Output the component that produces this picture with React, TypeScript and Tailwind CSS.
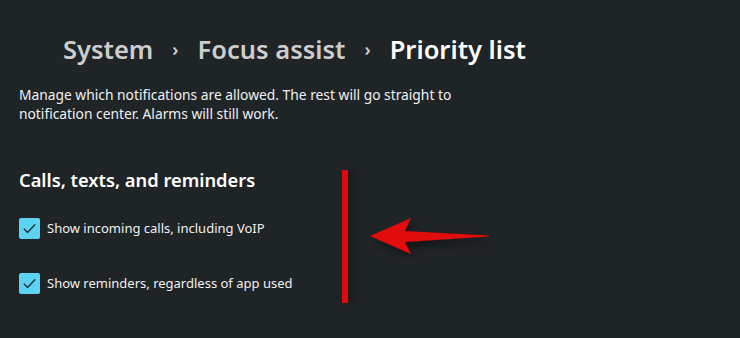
import React from 'react';

function Check() {
  return (
    <span className="flex h-[21px] w-[21px] items-center justify-center rounded-[2px] bg-[#5cd3f2]">
      <svg width="15" height="15" viewBox="0 0 14 14" fill="none">
        <path d="M2 7.5l3.2 3.2L12 3.5" stroke="#1b2a30" strokeWidth="1.2" strokeLinecap="round" strokeLinejoin="round" />
      </svg>
    </span>
  );
}

export default function App() {
  const items = ['Show incoming calls, including VoIP', 'Show reminders, regardless of app used'];

  return (
    <div
      className="relative h-[338px] w-[740px] overflow-hidden bg-[#1f2427] text-white"
      style={{ fontFamily: '"Noto Sans", "Open Sans", sans-serif' }}
    >
      {/* Breadcrumb */}
      <div className="flex items-center pl-[63px] pt-[27px] text-[25.5px] font-semibold leading-[44px]">
        <span className="text-[#cdcdcd]">System</span>
        <span className="mx-[19px] text-[18px] text-[#cdcdcd]">›</span>
        <span className="text-[#cdcdcd]">Focus assist</span>
        <span className="mx-[19px] text-[18px] text-[#cdcdcd]">›</span>
        <span className="text-white">Priority list</span>
      </div>

      <p className="mt-[14px] w-[470px] pl-[19px] text-[13.8px] leading-[19px] text-[#f0f0f0]">
        Manage which notifications are allowed. The rest will go straight to notification center. Alarms will still work.
      </p>

      <h2 className="mt-[44px] pl-[19px] text-[18.3px] font-semibold leading-[26px]">Calls, texts, and reminders</h2>

      <div className="mt-[25px] flex flex-col gap-[34px] pl-[19px]">
        {items.map((t) => (
          <label key={t} className="flex items-center gap-[7px] text-[13px] leading-[21px] text-[#f0f0f0]">
            <Check />
            <span>{t}</span>
          </label>
        ))}
      </div>

      {/* annotation */}
      <div className="absolute left-[342px] top-[170px] h-[133px] w-[6px] bg-[#e00808] shadow-[4px_0_8px_rgba(0,0,0,0.35)]" />
      <svg className="absolute left-[365px] top-[212px]" width="130" height="48" viewBox="365 212 130 48">
        <defs>
          <filter id="sh" x="-20%" y="-40%" width="140%" height="180%">
            <feDropShadow dx="4" dy="5" stdDeviation="4" floodColor="#000" floodOpacity="0.45" />
          </filter>
        </defs>
        <path d="M370 236 L411 218 L405 231 L489 235.5 L489 236.5 L405 242 L411 254 Z" fill="#e00808" filter="url(#sh)" />
      </svg>
    </div>
  );
}
